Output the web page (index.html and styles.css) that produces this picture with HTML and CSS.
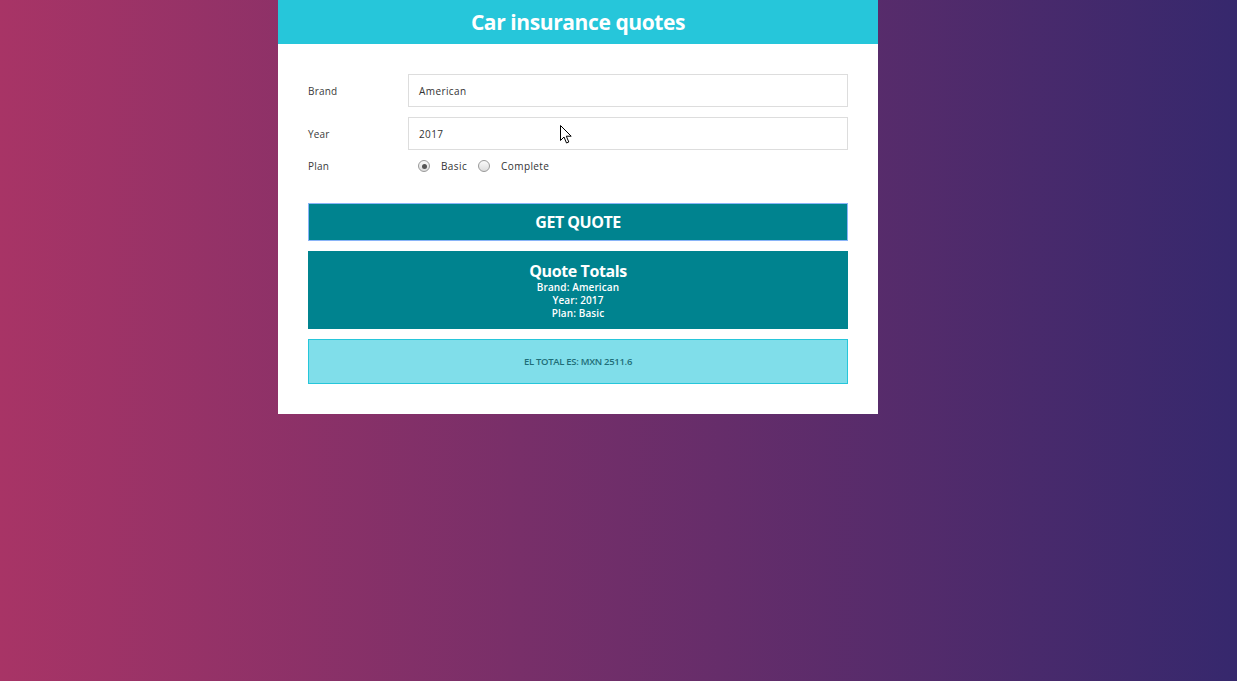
FILE: index.html
```html
<!DOCTYPE html>
<html>
<head>
<meta charset="utf-8">
<link rel="stylesheet" href="styles.css">
</head>
<body>
<div class="page">
  <div class="card">
    <header class="card-head">Car insurance quotes</header>
    <form class="form">
      <div class="row">
        <label class="label">Brand</label>
        <div class="input">American</div>
      </div>
      <div class="row">
        <label class="label">Year</label>
        <div class="input">2017</div>
      </div>
      <div class="row plan">
        <label class="label">Plan</label>
        <div class="radios">
          <span class="radio checked"></span><span class="rlabel">Basic</span>
          <span class="radio"></span><span class="rlabel">Complete</span>
        </div>
      </div>
      <button type="button" class="btn">GET QUOTE</button>
      <div class="summary">
        <h2 class="summary-title">Quote Totals</h2>
        <p class="summary-line">Brand: American</p>
        <p class="summary-line">Year: 2017</p>
        <p class="summary-line">Plan: Basic</p>
      </div>
      <div class="result">EL TOTAL ES: MXN 2511.6</div>
    </form>
  </div>
  <svg class="cursor" width="13" height="20" viewBox="0 0 13 20"><path d="M0.5 0.5 L0.5 15.5 L4 12 L6.5 18 L8.8 17 L6.3 11.2 L11.2 11.2 Z" fill="#fff" stroke="#000" stroke-width="1"/></svg>
</div>
</body>
</html>
```

FILE: styles.css
```css
* { box-sizing: border-box; }
html, body { margin: 0; padding: 0; height: 100%; }
body {
  font-family: "Open Sans", "Liberation Sans", sans-serif;
  background: linear-gradient(to right, #a83466, #36286d);
}
.page { position: relative; height: 681px; display: flex; padding-left: 278px; }
.card { width: 600px; background: #fff; align-self: flex-start; }
.card-head {
  height: 44px; background: #26c6da; color: #fff;
  font-weight: 700; font-size: 21px; letter-spacing: -0.4px;
  display: flex; align-items: center; justify-content: center;
}
.form { padding: 30px 30px 30px; display: flex; flex-direction: column; }
.row { display: flex; align-items: center; margin-bottom: 10px; }
.label { width: 100px; font-size: 10px; color: #3a3a3a; letter-spacing: 0.2px; }
.input {
  flex: 1; height: 33px; border: 1px solid #ddd; padding: 0 10px;
  display: flex; align-items: center; font-size: 10px; color: #333; letter-spacing: 0.4px;
}
.row.plan { margin-top: -2px; margin-bottom: 0; height: 16px; }
.radios { display: flex; align-items: center; padding-left: 10px; }
.radio {
  width: 12px; height: 12px; border-radius: 50%; border: 1px solid #999;
  background: linear-gradient(#fafafa, #ddd); position: relative;
}
.radio.checked::after {
  content: ""; position: absolute; left: 2.5px; top: 2.5px; width: 5px; height: 5px;
  border-radius: 50%; background: #555;
}
.rlabel { font-size: 10px; color: #333; margin-left: 11px; margin-right: 11px; letter-spacing: 0.4px; }
.btn {
  margin-top: 29px; height: 38px; background: #00838f; color: #fff;
  border: 1px solid #8ab4f8; font-family: inherit; font-weight: 700;
  font-size: 16px; letter-spacing: -0.5px; padding: 0;
}
.summary {
  margin-top: 10px; height: 78px; background: #00838f; color: #fff;
  display: flex; flex-direction: column; align-items: center; padding-top: 10px;
}
.summary-title { margin: 0; font-size: 16px; line-height: 20px; font-weight: 700; letter-spacing: -0.4px; }
.summary-line { margin: 0; font-size: 10px; line-height: 13px; font-weight: 600; letter-spacing: 0.1px; }
.result {
  margin-top: 10px; height: 45px; background: #80deea; border: 1px solid #26c6da;
  display: flex; align-items: center; justify-content: center;
  font-size: 9.5px; font-weight: 600; color: #1f6e78; letter-spacing: -0.3px;
}
.cursor { position: absolute; left: 560px; top: 125px; }
```
